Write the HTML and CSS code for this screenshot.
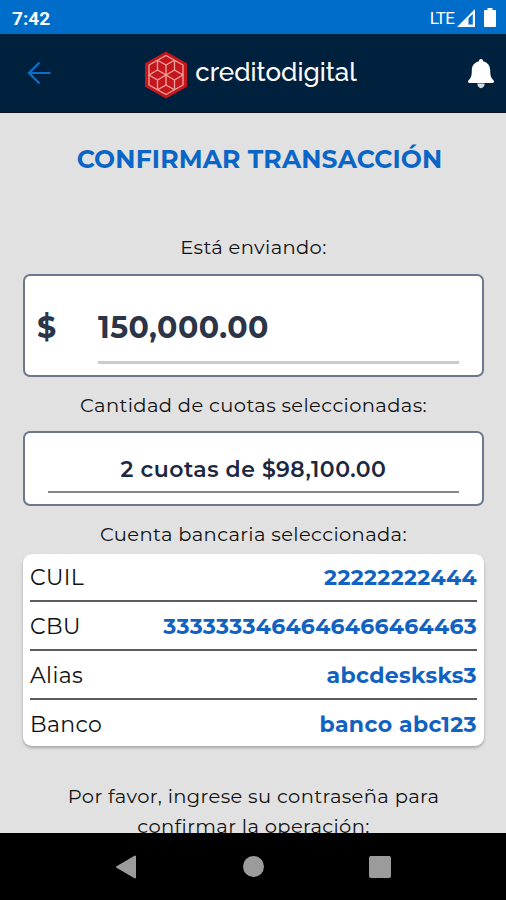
FILE: index.html
```
<!DOCTYPE html>
<html lang="es">
<head>
    <meta charset="UTF-8">
    <meta name="viewport" content="width=device-width, initial-scale=1.0">
    <title>Confirmar transacción</title>
    <link rel="stylesheet" href="styles.css">
</head>
<body>
    <!-- Status bar -->
    <div class="status-bar">
        <span class="clock">7:42</span>
        <div class="status-icons">
            <span class="network">LTE</span>
            <svg class="signal" width="18" height="18" viewBox="0 0 18 18">
                <path d="M0 18 18 0V18Z" fill="#f4f8fe"/>
                <path d="M11.500 9.200 15.800 5V15.600H11.500Z" fill="#006dca"/>
            </svg>
            <svg class="battery" width="12" height="19" viewBox="0 0 12 19">
                <path d="M3.500 0h5v2H11a1 1 0 0 1 1 1v15a1 1 0 0 1-1 1H1a1 1 0 0 1-1-1V3a1 1 0 0 1 1-1h2.500Z" fill="#fff"/>
            </svg>
        </div>
    </div>

    <!-- App header -->
    <header class="header">
        <svg class="back" width="24" height="24" viewBox="0 0 24 24" fill="none" stroke="#0b70cd" stroke-width="2.200">
            <path d="M23.500 12H2M12.500 1.500 2 12l10.500 10.500"/>
        </svg>
        <div class="brand">
            <svg class="logo" width="44" height="48" viewBox="0 0 44 48">
                <path d="M22 .5 43 12.200V35.800L22 47.500 1 35.800V12.200Z" fill="#c4161c"/>
                <g fill="none" stroke="#f0a79f" stroke-width="1.300" stroke-linejoin="round">
                    <path d="M22 4.500 39 14V34L22 43.500 5 34V14Z"/>
                    <path d="M13.500 9.200 22 14 30.500 9.200M13.500 38.800 22 34 30.500 38.800"/>
                    <path d="M13.500 9.200V19M30.500 9.200V19M13.500 29V38.800M30.500 29V38.800M22 14V34"/>
                    <path d="M5 24 13.500 19 22 24 13.500 29ZM39 24 30.500 19 22 24 30.500 29Z"/>
                </g>
            </svg>
            <span class="brand-name">creditodigital</span>
        </div>
        <svg class="bell" width="26" height="30" viewBox="0 0 26 30">
            <path d="M13 0c1.300 0 2 .9 2 2.200 4.700 1 7.200 4.600 7.200 9.300 0 5.500 1 7.500 3 9.500.5.600.8 1 .8 1.600 0 .8-.6 1.400-1.500 1.400h-23C.6 24 0 23.400 0 22.600 0 22 .3 21.600.8 21c2-2 3-4 3-9.500C3.800 6.800 6.300 3.200 11 2.200 11 .9 11.700 0 13 0Z" fill="#fff"/>
            <path d="M9.300 24.500h7.400a3.700 4.700 0 0 1-7.400 0Z" fill="#d5dae0"/>
        </svg>
    </header>

    <main class="content">
        <h1 class="title">CONFIRMAR TRANSACCIÓN</h1>

        <p class="label label-amount">Está enviando:</p>
        <div class="box amount-box">
            <span class="currency">$</span>
            <div class="amount">150,000.00</div>
        </div>

        <p class="label label-quotas">Cantidad de cuotas seleccionadas:</p>
        <div class="box quota-box">
            <div class="quota">2 cuotas de $98,100.00</div>
        </div>

        <p class="label label-account">Cuenta bancaria seleccionada:</p>
        <div class="account">
            <div class="row"><span class="key">CUIL</span><span class="value">22222222444</span></div>
            <div class="row"><span class="key">CBU</span><span class="value value-cbu">3333333464646466464463</span></div>
            <div class="row"><span class="key">Alias</span><span class="value">abcdesksks3</span></div>
            <div class="row"><span class="key">Banco</span><span class="value">banco abc123</span></div>
        </div>

        <p class="label label-password">Por favor, ingrese su contraseña para<br>confirmar la operación:</p>
    </main>

    <!-- Navigation bar -->
    <nav class="nav-bar">
        <svg width="22" height="24" viewBox="0 0 22 24">
            <path d="M20 1.500V22.500L2 12Z" fill="#9b9b9b" stroke="#9b9b9b" stroke-width="2" stroke-linejoin="round"/>
        </svg>
        <div class="nav-home"></div>
        <div class="nav-recent"></div>
    </nav>
</body>
</html>
```
FILE: styles.css
```
* {
    box-sizing: border-box;
}

body {
    margin: 0;
    height: 900px;
    display: flex;
    flex-direction: column;
    overflow: hidden;
    background-color: #e1e1e1;
    font-family: Montserrat, Inter, sans-serif;
    color: #111;
}

.status-bar {
    height: 34px;
    flex: none;
    display: flex;
    align-items: center;
    justify-content: space-between;
    padding: 2px 10px 0 12px;
    background-color: #006dca;
    color: #fff;
    font-family: Roboto, sans-serif;
}

.clock {
    font-size: 19px;
    font-weight: 700;
}

.status-icons {
    display: flex;
    align-items: center;
}

.network {
    font-size: 17px;
    letter-spacing: -0.8px;
}

.signal {
    margin-left: 3px;
}

.battery {
    margin-left: 9px;
    margin-top: -2px;
}

.header {
    height: 79px;
    flex: none;
    display: flex;
    align-items: center;
    justify-content: space-between;
    padding: 0 12px 0 27px;
    background-color: #00213d;
    border-bottom: 1px solid #0b1220;
}

.brand {
    display: flex;
    align-items: center;
    margin-left: -18px;
    padding-top: 3px;
}

.brand-name {
    margin: -5px 0 0 7px;
    color: #fff;
    font-family: Raleway, Lato, sans-serif;
    font-size: 26px;
    font-weight: 500;
}

.bell {
    margin-top: 2px;
}

.content {
    flex: none;
    height: 720px;
    overflow: hidden;
    padding: 0 22px 0 23px;
}

.title {
    margin: 29px 0 0 12px;
    color: #0a66c6;
    font-size: 25px;
    font-weight: 700;
    line-height: 34px;
    letter-spacing: 0.15px;
    text-align: center;
    white-space: nowrap;
}

.label {
    margin: 0;
    font-size: 19.5px;
    line-height: 30px;
    letter-spacing: 0.36px;
    text-align: center;
    white-space: nowrap;
}

.label-amount {
    margin-top: 56px;
}

.box {
    background-color: #fff;
    border: 2px solid #6c7890;
    border-radius: 7px;
}

.amount-box {
    height: 103px;
    margin-top: 12px;
    display: flex;
    padding: 20px 23px 11px 12px;
    color: #2c3548;
    font-size: 30px;
    font-weight: 700;
    line-height: 63px;
    letter-spacing: 0.5px;
}

.currency {
    width: 61px;
}

.amount {
    flex: 1;
    border-bottom: 3px solid #cbcbcb;
}

.label-quotas {
    margin-top: 13px;
}

.quota-box {
    height: 75px;
    margin-top: 11px;
    padding: 14px 23px 12px;
}

.quota {
    height: 46px;
    border-bottom: 2px solid #85878d;
    color: #1c2740;
    font-size: 22px;
    font-weight: 600;
    line-height: 46px;
    letter-spacing: 0.5px;
    text-align: center;
}

.label-account {
    margin-top: 13px;
}

.account {
    height: 192px;
    margin-top: 5px;
    padding: 0 7px;
    background-color: #fff;
    border-radius: 9px;
    box-shadow: 0 2px 3px rgba(0, 0, 0, 0.25);
}

.row {
    height: 49px;
    display: flex;
    justify-content: space-between;
    border-bottom: 2px solid #595b61;
    line-height: 50px;
}

.row:first-child {
    height: 48px;
    line-height: 47px;
}

.row:last-child {
    border-bottom: none;
}

.key {
    font-size: 22px;
    letter-spacing: 0.35px;
}

.value {
    color: #1262c1;
    font-size: 22px;
    font-weight: 700;
    letter-spacing: 0.35px;
}

.value-cbu {
    letter-spacing: 0.27px;
}

.label-password {
    margin-top: 35px;
}

.nav-bar {
    height: 67px;
    flex: none;
    display: flex;
    align-items: center;
    justify-content: space-between;
    padding: 0 115px;
    background-color: #000;
}

.nav-home {
    width: 21px;
    height: 21px;
    border-radius: 50%;
    background-color: #9b9b9b;
}

.nav-recent {
    width: 22px;
    height: 22px;
    border-radius: 2px;
    background-color: #9b9b9b;
}
```
